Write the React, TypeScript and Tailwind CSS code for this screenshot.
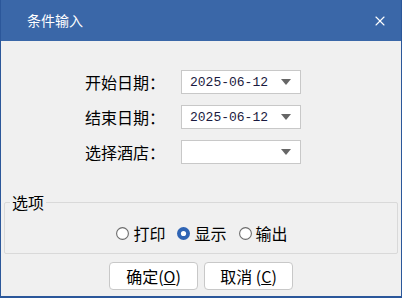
import { X } from "lucide-react";

const cjk = { fontFamily: '"Noto Sans CJK SC", "Noto Sans", sans-serif' };

function Combo({ value }: { value?: string }) {
  return (
    <div className="w-[120px] h-[24px] bg-white border border-[#c8c8c8] flex items-center justify-between pl-[8px] pr-[8px]">
      <span className="text-[13px] text-[#1a1a40] leading-none" style={{ fontFamily: '"Liberation Mono", monospace' }}>
        {value}
      </span>
      <svg width="10" height="6" viewBox="0 0 10 6" className="mr-[1px]">
        <path d="M0 0 H10 L5 6 Z" fill="#666" />
      </svg>
    </div>
  );
}

function Radio({ label, checked }: { label: string; checked?: boolean }) {
  return (
    <div className="flex items-center gap-[4px]">
      {checked ? (
        <svg width="13" height="13" viewBox="0 0 13 13">
          <circle cx="6.5" cy="6.5" r="6.5" fill="#2f64b4" />
          <circle cx="6.5" cy="6.5" r="2.6" fill="#fff" />
        </svg>
      ) : (
        <svg width="13" height="13" viewBox="0 0 13 13">
          <circle cx="6.5" cy="6.5" r="5.9" fill="#fff" stroke="#6b6b6b" strokeWidth="1.1" />
        </svg>
      )}
      <span className="text-[16px] leading-[20px] text-black">{label}</span>
    </div>
  );
}

export default function App() {
  const rows = [
    { label: "开始日期：", value: "2025-06-12" },
    { label: "结束日期：", value: "2025-06-12" },
    { label: "选择酒店：", value: "" },
  ];

  return (
    <div className="w-[402px] h-[298px] flex flex-col bg-[#f0f0f0] border-x border-b-2 border-[#2b579a] overflow-hidden" style={cjk}>
      <div className="h-[41px] shrink-0 bg-[#3a67a8] flex items-center justify-between pl-[27px] pr-[14px] -mx-px">
        <span className="text-[14px] text-white">条件输入</span>
        <X size={16} strokeWidth={1.6} className="text-white" />
      </div>

      <div className="flex flex-col gap-[11px] pt-[29px] pl-[84px]">
        {rows.map((r, i) => (
          <div key={i} className="flex items-center h-[24px]">
            <span className="w-[96px] text-[16px] leading-[20px] text-black">{r.label}</span>
            <Combo value={r.value} />
          </div>
        ))}
      </div>

      <div className="relative mt-[38px] mx-[3px] h-[52px] border border-[#d9d9d9] rounded-[2px]">
        <span className="absolute -top-[11px] left-[5px] px-[2px] bg-[#f0f0f0] text-[16px] text-black leading-[20px]">选项</span>
        <div className="flex justify-center gap-[12px] pt-[20px] pl-[2px]">
          <Radio label="打印" />
          <Radio label="显示" checked />
          <Radio label="输出" />
        </div>
      </div>

      <div className="flex justify-center gap-[6px] mt-[8px]">
        <button className="w-[89px] h-[28px] bg-white border border-[#c8c8c8] rounded-[4px] text-[16px] leading-[20px] text-black">
          确定(<span className="underline">O</span>)
        </button>
        <button className="w-[89px] h-[28px] bg-white border border-[#c8c8c8] rounded-[4px] text-[16px] leading-[20px] text-black">
          取消 (<span className="underline">C</span>)
        </button>
      </div>
    </div>
  );
}
